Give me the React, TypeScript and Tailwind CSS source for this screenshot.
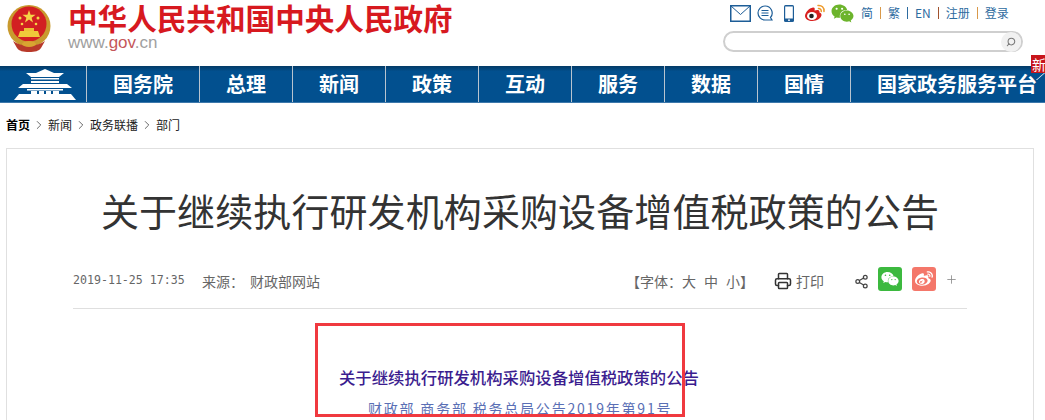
import React from 'react';
import { ChevronRight, Printer, Share2, Search, Plus } from 'lucide-react';
import { FaWeibo, FaWeixin } from 'react-icons/fa';

const navItems = [
  { label: '国务院', width: 'w-[113px]' },
  { label: '总理', width: 'w-[93px]' },
  { label: '新闻', width: 'w-[93px]' },
  { label: '政策', width: 'w-[93px]' },
  { label: '互动', width: 'w-[93px]' },
  { label: '服务', width: 'w-[93px]' },
  { label: '数据', width: 'w-[93px]' },
  { label: '国情', width: 'w-[93px]' },
];

const cjk = "font-['Noto_Sans_CJK_SC','Liberation_Sans',sans-serif]";

const Emblem = () => (
  <svg width="44" height="48" viewBox="0 0 44 48" className="shrink-0">
    <ellipse cx="22" cy="22" rx="21.500" ry="21" fill="#c99a2e" />
    <circle cx="22" cy="20" r="17.500" fill="#d21f22" />
    <polygon points="22,6 23.600,10.800 28.600,10.800 24.600,13.800 26,18.600 22,15.600 18,18.600 19.400,13.800 15.400,10.800 20.400,10.800" fill="#f5d547" />
    <circle cx="13" cy="14" r="1.500" fill="#f5d547" />
    <circle cx="31" cy="14" r="1.500" fill="#f5d547" />
    <circle cx="15" cy="20" r="1.300" fill="#f5d547" />
    <circle cx="29" cy="20" r="1.300" fill="#f5d547" />
    <path d="M17 24h10v3H17z" fill="#eebf35" />
    <path d="M13 27h18l2 6H11z" fill="#f0c93a" />
    <path d="M6 37c8 6 24 6 32 0l-4 7c-2 3-6 4-12 4s-10-1-12-4z" fill="#b8392a" />
    <ellipse cx="22" cy="40" rx="7" ry="3" fill="#d9a431" />
  </svg>
);

const Gate = () => (
  <svg width="62" height="31" viewBox="0 0 62 31" fill="#fff">
    <path d="M12 4 L22 4 L31 0 L40 4 L50 4 L45 8 L17 8 Z" />
    <path d="M17 9h28v1.500H17zM17 12h28v2H17z" />
    <path d="M9 15h44l5 4H4z" />
    <path d="M13 20h36v1.500H13z" />
    <path d="M17 22h6v3h-6zM25 22h5v3h-5zM32 22h5v3h-5zM39 22h6v3h-6z" />
    <path d="M5 25h52l5 6H0z" />
  </svg>
);

const MailIcon = () => (
  <svg width="21" height="17" viewBox="0 0 21 17" fill="none" stroke="#1d5d97">
    <rect x="0.750" y="0.750" width="19.500" height="15.500" strokeWidth="1.500" />
    <path d="M1 1l9.500 8.500L20 1" strokeWidth="1" />
  </svg>
);

const MessageIcon = () => (
  <svg width="16" height="16" viewBox="0 0 16 16" fill="none" stroke="#1d5d97">
    <path d="M8 1a7 7 0 1 0 0 14h7l-1.500-2.500A7 7 0 0 0 8 1z" strokeWidth="1.200" />
    <path d="M4.500 5.500h7M4.500 8h7M4.500 10.500h7" strokeWidth="1" />
  </svg>
);

const PhoneIcon = () => (
  <svg width="10" height="17" viewBox="0 0 10 17">
    <rect x="0" y="0" width="10" height="17" rx="1.500" fill="#1d5d97" />
    <rect x="1.200" y="1.500" width="7.600" height="12" fill="#fff" />
    <circle cx="5" cy="15.200" r="0.900" fill="#fff" />
  </svg>
);

const WeiboIcon = () => (
  <svg width="22" height="18" viewBox="0 0 22 18" fill="none">
    <path d="M1 12c0-3 4-8 8-8.500 2-.2 2 1.500 1.500 3 3-1 5-.5 5 1 0 .5 0 1 0 1 1.500.500 2 1.500 2 2.500 0 3-5 6-9 6-4 0-7.500-2-7.500-5z" fill="#d9201f" />
    <ellipse cx="8" cy="12" rx="5" ry="4" fill="#fff" />
    <circle cx="7.500" cy="12" r="2.300" fill="#222" />
    <path d="M14 1.500c3.500-.5 6.500 2 6 6M14.500 4.500c1.500-.2 3 1 2.800 3" stroke="#ee9a2a" strokeWidth="1.500" strokeLinecap="round" />
  </svg>
);

const HeaderLink = ({ children }: { children: React.ReactNode }) => (
  <span className="text-[12px] text-[#2d6b9f]">{children}</span>
);

const Sep = ({ color }: { color: string }) => <span className={`w-px h-[12px] ${color}`} />;

const Crumb = () => (
  <span className="w-[18px] flex justify-center">
    <ChevronRight size={14} strokeWidth={1} className="text-black" />
  </span>
);

export default function App() {
  return (
    <div className={`relative w-[1045px] h-[420px] overflow-hidden bg-white ${cjk}`}>
      {/* Header */}
      <header className="flex justify-between h-[66px]">
        <div className="flex pl-[7px] pt-[4px] gap-[17px]">
          <Emblem />
          <div className="-mt-[4px]">
            <div className="text-[29.600px] leading-[35px] font-bold text-[#d7191f] whitespace-nowrap">
              中华人民共和国中央人民政府
            </div>
            <div className="text-[17px] leading-[15px] text-[#a0a0a0] font-['Liberation_Sans',sans-serif]">
              www.<span className="text-[#c5575a]">gov</span>.cn
            </div>
          </div>
        </div>
        <div className="w-[300px] mr-[22px] pt-[3px]">
          <div className="flex items-center h-[20px] pl-[7px]">
            <MailIcon />
            <span className="ml-[6px]"><MessageIcon /></span>
            <span className="ml-[11px]"><PhoneIcon /></span>
            <span className="ml-[10px]"><WeiboIcon /></span>
            <FaWeixin size={23} className="text-[#6cb42c] ml-[5px] mr-[7px]" />
            <div className="flex items-center gap-[7px]">
              <HeaderLink>简</HeaderLink>
              <Sep color="bg-[#d9994a]" />
              <HeaderLink>繁</HeaderLink>
              <Sep color="bg-[#2d6b9f]" />
              <HeaderLink>EN</HeaderLink>
              <Sep color="bg-[#a0522d]" />
              <HeaderLink>注册</HeaderLink>
              <Sep color="bg-[#d9994a]" />
              <HeaderLink>登录</HeaderLink>
            </div>
          </div>
          <div className="mt-[8px] w-[300px] h-[21px] rounded-full border-2 border-[#cfcfcf] bg-white flex justify-end items-center">
            <div className="w-[20px] h-[20px] rounded-full bg-[#f1f1f1] flex items-center justify-center">
              <Search size={10} className="text-[#777] -scale-x-100" strokeWidth={2.500} />
            </div>
          </div>
        </div>
      </header>

      {/* Nav */}
      <nav className="relative flex h-[37px] bg-[#02508f] bg-gradient-to-b from-[#033a66] via-[#02508f] via-[15%] to-[#02508f] border-b border-[#3d78ab]">
        <div className="w-[86px] flex items-center justify-center pl-[3px] pt-[1px]">
          <Gate />
        </div>
        {navItems.map((item) => (
          <div
            key={item.label}
            className={`${item.width} border-l border-[#b8c4cf] flex items-center justify-center text-white font-bold text-[20px]`}
          >
            {item.label}
          </div>
        ))}
        <div className="flex-1 border-l border-[#b8c4cf] pl-[26px] flex items-center text-white font-bold text-[20px] whitespace-nowrap">
          国家政务服务平台
        </div>
        <div className="absolute right-0 -top-[11px] w-[14px] h-[18px] overflow-hidden bg-[#c8151b] text-white text-[14px] leading-[18px] pl-[1px] whitespace-nowrap">
          新
        </div>
        <svg width="9" height="7" viewBox="0 0 9 7" className="absolute right-0 top-[7px]">
          <path d="M0 7L8 0h1L1 7z" fill="#fff" />
        </svg>
      </nav>

      {/* Breadcrumb */}
      <div className="flex items-center pl-[6px] h-[45px] pb-[2px] text-[12px] text-[#222]">
        <span className="font-bold text-black">首页</span>
        <Crumb />
        <span>新闻</span>
        <Crumb />
        <span>政务联播</span>
        <Crumb />
        <span>部门</span>
      </div>

      {/* Article */}
      <main className="ml-[6px] w-[1028px] h-[300px] border border-[#e0e0e0] px-[66px]">
        <h1 className="pt-[36px] text-[38px] leading-[50px] tracking-[0.100px] text-[#333] text-center font-normal whitespace-nowrap">
          关于继续执行研发机构采购设备增值税政策的公告
        </h1>
        <div className="mt-[34px] h-[40px] pb-[15px] flex items-center border-b border-[#dfdfdf] text-[#666] text-[14px]">
          <span className="font-['DejaVu_Sans_Mono',monospace] text-[11.600px] w-[129px]">2019-11-25 17:35</span>
          <span>来源：</span>
          <span className="ml-[6px]">财政部网站</span>
          <span className="ml-[306px] flex whitespace-nowrap">
            <span>【字体：大</span>
            <span className="ml-[8px]">中</span>
            <span className="ml-[8px]">小】</span>
          </span>
          <Printer size={18} className="ml-[20px] text-[#333]" />
          <span className="ml-[4px]">打印</span>
          <Share2 size={15} className="ml-[30px] text-[#444]" />
          <span className="ml-[9px] mb-[4px] w-[24px] h-[24px] rounded-[3px] bg-[#3cb93f] flex items-center justify-center">
            <FaWeixin size={18} className="text-white" />
          </span>
          <span className="ml-[10px] mb-[4px] w-[24px] h-[24px] rounded-[3px] bg-[#f4776a] flex items-center justify-center">
            <FaWeibo size={18} className="text-white" />
          </span>
          <Plus size={13} strokeWidth={1.500} className="ml-[9px] mb-[4px] text-[#888]" />
        </div>
        <div className="pt-[57px] pl-[266px] w-[700px]">
          <div className="text-[16.360px] leading-[22px] font-medium text-[#3b1d8f] whitespace-nowrap">
            关于继续执行研发机构采购设备增值税政策的公告
          </div>
          <div className="mt-[10px] ml-[29px] text-[14px] leading-[20px] tracking-[1.800px] text-[#5a6fb5] whitespace-nowrap">
            财政部&nbsp;商务部&nbsp;税务总局公告2019年第91号
          </div>
        </div>
      </main>

      {/* Red annotation box */}
      <div className="absolute left-[315px] top-[323px] w-[370px] h-[94px] border-[3px] border-[#f0393f]" />
    </div>
  );
}
